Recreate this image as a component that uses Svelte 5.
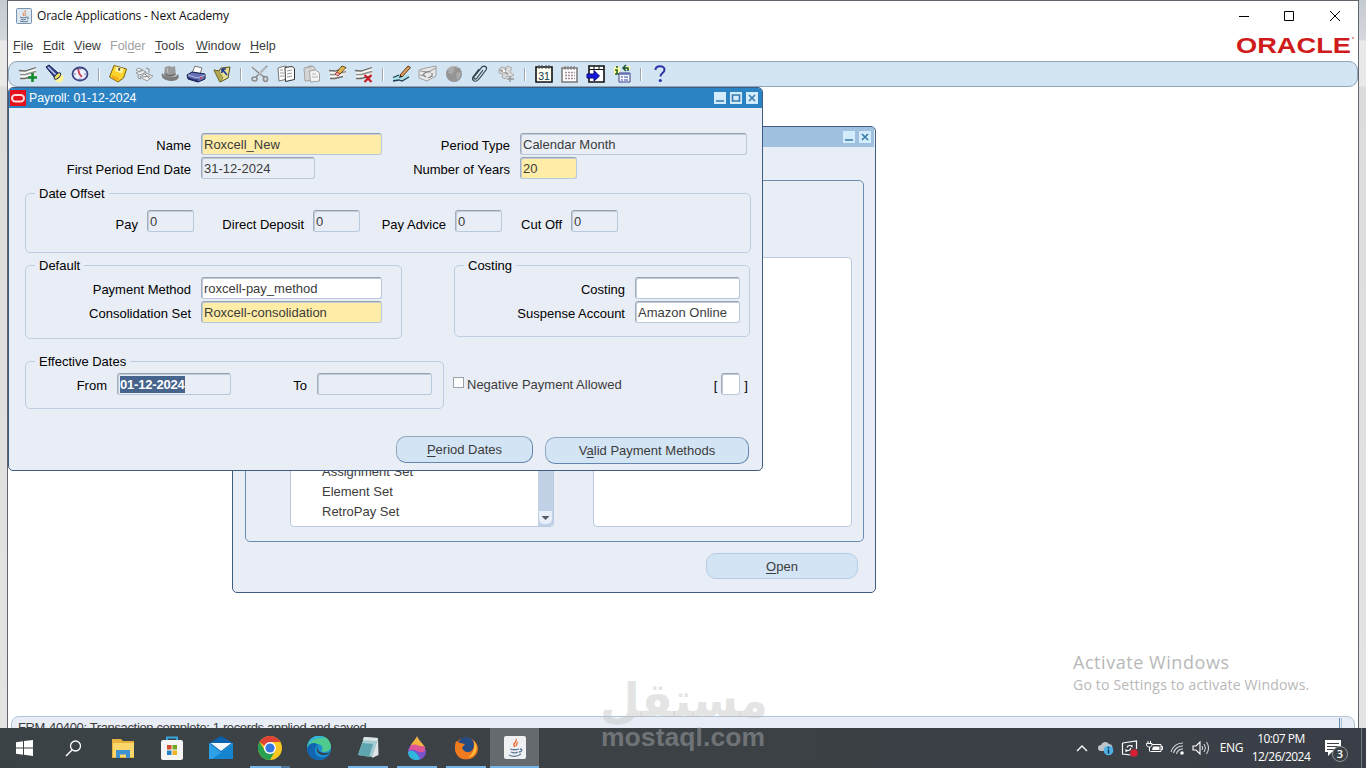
<script lang="ts">
    type Tool = { name: string; art: string };

    const menus = [
        {pre: "", key: "F", post: "ile", w: 30},
        {pre: "", key: "E", post: "dit", w: 31},
        {pre: "", key: "V", post: "iew", w: 36},
        {pre: "Fol", key: "d", post: "er", w: 45, off: true},
        {pre: "", key: "T", post: "ools", w: 41},
        {pre: "", key: "W", post: "indow", w: 54},
        {pre: "", key: "H", post: "elp", w: 40},
    ];

    const rows = `<path d="M2 6l5 1 11-4v9L7 16l-5-1z" fill="#e6e6e0"/><path d="M1 6.500l6 .5 11-3.500M2 14.500h5l8-2" stroke="#6d6d6d" fill="none" stroke-width="1.300"/><path d="M2 10.500h5l11-3" stroke="#8f8f8f" fill="none" stroke-width="1.300"/><path d="M2 9h5l11-3.500M2 12.500h5l8-2" stroke="#fff" fill="none"/>`;

    const toolbar: Tool[][] = [
        [
            {name: "New", art: rows + `<path d="M14.500 9v9M10 13.500h9" stroke="#118a2d" stroke-width="2.600"/>`},
            {name: "Find", art: `<circle cx="15" cy="14" r="4.500" fill="#fff79a"/><path d="M2 3l3-2 9 8-3 5z" fill="#31418c" stroke="#111c50"/><path d="M4 3l8 8" stroke="#c8d0f4" stroke-width="1.500"/><ellipse cx="13.500" cy="12" rx="2" ry="4" transform="rotate(45 13.500 12)" fill="#f7e45c" stroke="#26305e"/>`},
            {name: "Navigator", art: `<ellipse cx="10" cy="10" rx="7.500" ry="6.500" fill="#eef1fb" stroke="#3b4380" stroke-width="1.800"/><path d="M8 5l1.500 5 2.500 3" stroke="#c94057" stroke-width="1.800" fill="none"/><path d="M10 4v2M10 14v2M4 10h2M14 10h2" stroke="#6b78b8"/>`},
        ],
        [
            {name: "Save", art: `<path d="M6 1.500l12.500 3.500-3 9-5.500 4-8.500-5z" fill="#fbd52e" stroke="#79600c"/><path d="M8 2.500l7.500 2-1.500 5-7-2.500z" fill="#fff3a0"/><path d="M5 11l6 3-1.500 3.500-6-4z" fill="#f5ad18"/><path d="M11.500 4l-.5 2.500" stroke="#444" stroke-width="1.800"/>`},
            {name: "Next Step", art: `<path d="M4 4l5 2-3 2-4-2zM2 9l6-3 4 2-6 3zM6 13l6-4 7 3-6 5z" fill="#f0f0f0" stroke="#999"/><path d="M12 4l3 1v4M8 13l8-1M11 10l5 5M4 11v3l3 1" stroke="#8c8c8c" fill="none"/>`},
            {name: "Switch Responsibility", art: `<path d="M4 10l1-7 4-1 3 1 3-1 1 9-4 3-6-1z" fill="#9a9a9a"/><path d="M2 9c-2 6 5 8 10 8 6 0 8-4 6-7-2 4-11 5-16-1z" fill="#7c7c7c"/><path d="M5 10c3 2 7 2 10 0" stroke="#666" fill="none" stroke-width="1.500"/><path d="M7 4l1 5" stroke="#c4c4c4"/>`},
            {name: "Print", art: `<path d="M6 9l3-7 7 2-2 6z" fill="#fff" stroke="#777"/><path d="M1 11l5-3 13 2v5l-7 3-10-3z" fill="#6670b4" stroke="#171d4a"/><path d="M2 11l10 3 7-3" stroke="#b5bce4" fill="none"/><path d="M2 14l9 3v-2" stroke="#262d6c" stroke-width="1.500" fill="none"/><circle cx="15" cy="14" r="1" fill="#df4040"/>`},
            {name: "Close Form", art: `<path d="M2 6l5 1 2-3 9-1-2 11-8 4z" fill="#e9df93" stroke="#55501a"/><path d="M2 6l6 12 3-4-4-7z" fill="#b4aa50" stroke="#6b642a" stroke-width=".6"/><path d="M10 5l5 6M10 5v4M10 5h4" stroke="#17389b" stroke-width="1.600"/>`},
        ],
        [
            {name: "Cut", art: `<path d="M2 3l12 10M17 2L6 13" stroke="#858585" stroke-width="1.600"/><path d="M3 3l10 8M16 3l-8 8" stroke="#e5e5e5" stroke-width=".7"/><ellipse cx="4.500" cy="15" rx="2.500" ry="2" fill="none" stroke="#8d8d8d" stroke-width="1.600"/><ellipse cx="15.500" cy="15" rx="2" ry="2.500" fill="none" stroke="#8d8d8d" stroke-width="1.600"/>`},
            {name: "Copy", art: `<path d="M2 4l7-2 2 1v12l-8 2z" fill="#fff" stroke="#777"/><path d="M9 3.500l7-1 2.500 2v11l-9 2z" fill="#fff" stroke="#333"/><path d="M4 6h3M4 9h4M4 12h4M11 7l5-1M11 10l5-1M11 13l5-1" stroke="#999"/>`},
            {name: "Paste", art: `<path d="M2 4l9-2 2 2v12l-10 1z" fill="#d4d4d4" stroke="#a5a5a5"/><path d="M6 4V2l3-1 1 2" fill="#aaa"/><path d="M7.500 7l6-1 4 3v8l-9 1z" fill="#f4f4f4" stroke="#a0a0a0"/><path d="M10 10h4M10 13h6" stroke="#b5b5b5"/>`},
            {name: "Clear Record", art: rows + `<path d="M8 9l6-7 4 1.500-7 7.500z" fill="#e7b952" stroke="#4a3012" stroke-width=".8"/><path d="M7 10l2-2 3 2-2 2z" fill="#f3adb0" stroke="#922" stroke-width=".8"/>`},
            {name: "Delete Record", art: rows + `<path d="M10.500 11l7 7M17.500 11l-7 7" stroke="#c91924" stroke-width="2.200"/>`},
        ],
        [
            {name: "Edit Field", art: `<path d="M1 14l6-3 2 2 8-3v3l-8 3-2-1-6 2z" fill="#a9e0e8"/><path d="M1 13.500l6-2.500M1 17l6-1 3 1 7-4" stroke="#1c3d50" fill="none" stroke-width="1.300"/><path d="M8 11l8-9 2.500 1.500L10 13z" fill="#d8a05a" stroke="#55290c" stroke-width=".9"/><path d="M8 11l2 2-3 1z" fill="#222"/>`},
            {name: "Zoom", art: `<path d="M1 6l7-2 10-2v10l-9 5-8-3z" fill="#e8e8e8" stroke="#a0a0a0"/><path d="M2 7l8 1 8-4M2 11l5 1" stroke="#999" fill="none"/><path d="M13 8c-3-1-6 0-8 3l3 2M14 9v3l-4 2" stroke="#888" fill="none" stroke-width="1.300"/>`},
            {name: "Translations", art: `<circle cx="10" cy="10" r="8" fill="#949494"/><path d="M5 5l4-2 2 3-3 4-4-1zM12 9l5-1-1 5-3 3z" fill="#aaa"/><path d="M4 6c2-4 8-4 10-2" stroke="#c4c4c4" fill="none"/>`},
            {name: "Attachments", art: `<path d="M13 6l-6 8c-1 2-4 1-3-1l8-10c2-2 6 0 4 3l-7 9c-3 4-8 2-6-2l6-8" fill="none" stroke="#31434b" stroke-width="1.200"/>`},
            {name: "Folder Tools", art: `<path d="M3 5l3-2 3 1 3-2 4 2-2 4 4 3-3 2-4-1-2 3-3-2 1-3-4-1z" fill="#dadada" stroke="#aaa"/><path d="M4 6l8 4M10 4L8 9M14 12v6M11 15h7" stroke="#999" stroke-width="1.400"/><circle cx="8" cy="7" r="1.200" fill="#fff"/>`},
        ],
        [
            {name: "Calendar", art: `<path d="M2 3h16v15H2z" fill="#fffff4" stroke="#111" stroke-width="1.600"/><path d="M5 1v4M8 1v4M12 1v4M15 1v4" stroke="#555"/><text x="10" y="15.500" text-anchor="middle" font-family="Liberation Sans" font-size="10.500" fill="#0d3548">31</text>`},
            {name: "Schedule", art: `<path d="M2 4h15v14H2z" fill="#fff" stroke="#777" stroke-width="1.500"/><path d="M5 2v4M8 2v4M11 2v4M14 2v4" stroke="#777"/><path d="M5 8.500h10M5 11.500h10M5 14.500h10" stroke="#a58b98" stroke-width="1.600" stroke-dasharray="2 1"/>`},
            {name: "Transfer", art: `<path d="M3 2h15v16H3z" fill="#fff" stroke="#111" stroke-width="1.600"/><path d="M3 5.500h15M8 2v4M13 2v4" stroke="#111"/><path d="M1 10h7V6.500l5.500 5.500L8 17v-3H1z" fill="#1717df" stroke="#08087e"/>`},
            {name: "Tasks", art: `<path d="M2 3h6v7H2zM11 2h7v4h-7z" fill="#ffffa2"/><path d="M5 2v2M3 6h2v4M3 10h5" stroke="#28652a" stroke-width="1.600" fill="none"/><path d="M12 4h4v3M14 1l-3 3 3 3" stroke="#17523e" stroke-width="1.500" fill="none"/><path d="M7 9h11v9H7z" fill="#f5f7ff" stroke="#364084"/><path d="M8 10h9" stroke="#5265b4" stroke-width="1.500"/><path d="M9 13h2M12 13h4M9 16h2M12 16h4" stroke="#3e4f9b"/>`},
        ],
        [
            {name: "Help", art: `<path d="M5.500 6c0-5 9-5 9-.5 0 4-4 3-4 7" fill="none" stroke="#2935a3" stroke-width="2"/><circle cx="10.300" cy="16.500" r="1.600" fill="#2935a3"/>`},
        ],
    ];

    const offsets = [
        {label: "Pay", value: 0},
        {label: "Direct Deposit", value: 0},
        {label: "Pay Advice", value: 0},
        {label: "Cut Off", value: 0},
    ];

    const reports = ["Assignment Set", "Element Set", "RetroPay Set"];

    const apps = [
        {name: "File Explorer", run: "", art: `<path d="M1 3h9l2 2h11v17H1z" fill="#e6b23b"/><path d="M2 7h21v14H2z" fill="#fbd76b"/><path d="M5 14h14v8h-4v-3.500H9V22H5z" fill="#3f92d2"/>`},
        {name: "Store", run: "", art: `<path d="M7 5V1.500h10V5" fill="none" stroke="#35a5d8" stroke-width="2"/><rect x="1" y="4" width="22" height="20" rx="2" fill="#f5f5f5"/><path d="M7 9h4.500v4.500H7z" fill="#d34d2c"/><path d="M12.500 9H17v4.500h-4.500z" fill="#75a528"/><path d="M7 14.500h4.500V19H7z" fill="#247ec4"/><path d="M12.500 14.500H17V19h-4.500z" fill="#eeb321"/>`},
        {name: "Mail", run: "", art: `<path d="M0 7l12-7 12 7v16H0z" fill="#0b63ae"/><path d="M0 7l12 9 12-9v16H0z" fill="#2da1e5"/><path d="M3 23l21-15v15z" fill="#1684cf"/><path d="M1.500 7h21L12 15z" fill="#f4fafd"/>`},
        {name: "Chrome", run: "multi", art: `<circle cx="12" cy="12" r="12" fill="#f8c820"/><path d="M1.600 6A12 12 0 0 1 22.400 6H12v8z" fill="#df4336"/><path d="M1.600 6A12 12 0 0 0 12 24l5-9-10 0z" fill="#299f50"/><circle cx="12" cy="12" r="6" fill="#fff"/><circle cx="12" cy="12" r="4.600" fill="#3576e1"/>`},
        {name: "Edge", run: "", art: `<circle cx="12" cy="12" r="12" fill="#1b8fd0"/><path d="M.5 9C3-2 22-4 24 10c0 6-7 7-10 5 3-2 1-7-4-7C5 7 2 10 0 13z" fill="#4fcb8f"/><path d="M.5 9C3-1 14-3 19 3 11 0 3 4 .3 11z" fill="#35b6d8"/><path d="M0 12c2-6 9-6 11-3-5 3-4 10 2 12 3 1 6 0 9-3-5 10-22 7-22-6z" fill="#1265ae"/><path d="M11 10c-2 4 2 8 9 7l3-1c-3 4-11 4-13-1-.6-2 0-4 1-5z" fill="#343d42"/>`},
        {name: "Notepad", run: "single", art: `<path d="M8 1l14 1-5 19-15-2z" fill="#a4ccd2"/><path d="M8 1l14 1-1 3L7 4z" fill="#dde5e5"/><path d="M6 7l11 1-4 13-11-2z" fill="#5fa5b0"/><path d="M22 2l.5 17-6.500 3z" fill="#dfe6e5"/>`},
        {name: "Paint 3D", run: "single", art: `<path d="M12 0c1 5 9 9 9 16a9 8 0 0 1-18 0C3 9 11 5 12 0z" fill="#7754cc"/><path d="M12 0c2 5 7 8 8 12-6 3-8-3-14 0C5 7 11 4 12 0z" fill="#f3b43d"/><path d="M5 11c5-6 9 1 14-1l1 5c-7 4-9-4-16 0z" fill="#df5598"/><path d="M3 16c4-3 9 0 12 7-6 3-12-1-12-7z" fill="#30b8dc"/>`},
        {name: "Firefox", run: "single", art: `<circle cx="12" cy="12.500" r="11" fill="#e76420"/><circle cx="12" cy="9" r="8" fill="#264b83"/><path d="M2 5l4 2 5 1-3 4c3 6 9 5 12 1 2-3 0-7-1-9 9 6 5 19-6 19C3 24-1 14 2 5z" fill="#f07b1f"/><path d="M20 5c5 7 2 15-6 17 6-5 7-10 6-17z" fill="#ffc33b"/>`},
        {name: "Java", run: "active", art: `<rect x="1" y="0" width="22" height="23" rx="2" fill="#eef0f2"/><path d="M13 3c2 3-5 4-1 8M15 6c-3 2 0 2-2 4" fill="none" stroke="#ef7542" stroke-width="1.500"/><path d="M7 13c2 1 7 1 9 0M8 16c2 1 5 1 7 0M6 19c4 2 9 1 12-1M17 13c3 0 2 3-1 3" fill="none" stroke="#587998" stroke-width="1.300"/>`},
    ];
</script>

{#snippet field(value: string | number, kind: string, size: string)}
    <span class="field {kind} {size}">{value}</span>
{/snippet}

{#snippet frameButtons(maximize: boolean)}
    <div class="frame-buttons">
        <svg viewBox="0 0 12 12"><path d="M2 9h8" /></svg>
        {#if maximize}
            <svg viewBox="0 0 12 12"><path d="M2.500 3h7v6h-7z" /></svg>
        {/if}
        <svg viewBox="0 0 12 12"><path d="M3 3l6 6M9 3l-6 6" /></svg>
    </div>
{/snippet}

<div class="desktop">
    <div class="app">
        <header class="titlebar">
            <svg class="java" viewBox="0 0 16 16"><rect x=".5" y=".5" width="15" height="15" rx="1" fill="#dde7f0" stroke="#7894b0" /><path d="M9 2c2 2-4 3-1 6M10 5c-2 1 0 1-1 3" fill="none" stroke="#e57c43" /><path d="M4 9c2 1 5 1 7 0M5 11c1 1 4 1 5 0M4 13c3 1 6 1 8 0M11 9c2 0 2 2 0 2" fill="none" stroke="#567392" /></svg>
            <span class="caption">Oracle Applications - Next Academy</span>
            <svg class="controls" viewBox="0 0 110 20"><path d="M5 10.500h10M50.500 5.500h9v9h-9zM96 5l10 10M106 5l-10 10" /></svg>
        </header>

        <nav class="menubar">
            {#each menus as m}
                <span class:off={m.off} style="width: {m.w}px">{m.pre}<u>{m.key}</u>{m.post}</span>
            {/each}
            <svg class="oracle" viewBox="0 0 120 20"><text x="0" y="17.500" textLength="115" lengthAdjust="spacingAndGlyphs">ORACLE</text><circle cx="117" cy="3" r=".8" /></svg>
        </nav>

        <div class="toolbar">
            {#each toolbar as group, i}
                {#if i > 0}<i class="sep"></i>{/if}
                {#each group as tool}
                    <button class="tool" aria-label={tool.name}><svg viewBox="0 0 20 20">{@html tool.art}</svg></button>
                {/each}
            {/each}
        </div>

        <main class="workspace">
            <section class="frame navigator">
                <div class="frame-title">{@render frameButtons(false)}</div>
                <div class="panel">
                    <div class="list reports">
                        <ul>
                            {#each reports as r}
                                <li>{r}</li>
                            {/each}
                        </ul>
                        <div class="scrollbar"><svg viewBox="0 0 13 13"><path d="M2.500 5h8l-4 4z" /></svg></div>
                    </div>
                    <div class="list top-ten"></div>
                </div>
                <button class="push open"><span><u>O</u>pen</span></button>
            </section>

            <section class="frame payroll">
                <div class="frame-title">
                    <svg class="badge" viewBox="0 0 16 16"><path d="M0 0h16v16H0z" fill="#e5101c" /><rect x="2" y="5" width="12" height="6.500" rx="3.200" fill="none" stroke="#ffdada" stroke-width="2" /></svg>
                    <span>Payroll: 01-12-2024</span>
                    {@render frameButtons(true)}
                </div>

                <div class="basics">
                    <label>Name</label>{@render field("Roxcell_New", "required", "w181")}
                    <label>Period Type</label>{@render field("Calendar Month", "locked", "w227")}
                    <label>First Period End Date</label>{@render field("31-12-2024", "locked", "w114")}
                    <label>Number of Years</label>{@render field("20", "required", "w57")}
                </div>

                <fieldset class="offset">
                    <legend>Date Offset</legend>
                    <div class="offset-row">
                        {#each offsets as o}
                            <div><label>{o.label}</label>{@render field(o.value, "locked", "w47")}</div>
                        {/each}
                    </div>
                </fieldset>

                <div class="pair">
                    <fieldset class="default">
                        <legend>Default</legend>
                        <div class="lines">
                            <label>Payment Method</label>{@render field("roxcell-pay_method", "", "w181")}
                            <label>Consolidation Set</label>{@render field("Roxcell-consolidation", "required", "w181")}
                        </div>
                    </fieldset>
                    <fieldset class="costing">
                        <legend>Costing</legend>
                        <div class="lines">
                            <label>Costing</label>{@render field("", "", "w105")}
                            <label>Suspense Account</label>{@render field("Amazon Online", "", "w105")}
                        </div>
                    </fieldset>
                </div>

                <div class="dates-row">
                    <fieldset class="effective">
                        <legend>Effective Dates</legend>
                        <div class="dates">
                            <label>From</label><span class="field locked w114"><mark>01-12-2024</mark></span>
                            <label>To</label>{@render field("", "locked", "w115")}
                        </div>
                    </fieldset>
                    <div class="negative"><i class="check"></i><span>Negative Payment Allowed</span></div>
                    <div class="flex-field"><b>[</b>{@render field("", "", "w19")}<b>]</b></div>
                </div>

                <div class="actions">
                    <button class="push strong period"><span><u>P</u>eriod Dates</span></button>
                    <button class="push strong valid"><span>V<u>a</u>lid Payment Methods</span></button>
                </div>
            </section>
        </main>

        <footer class="status"><span>FRM-40400: Transaction complete: 1 records applied and saved.</span><i></i></footer>
    </div>

    <div class="activate">
        <h2>Activate Windows</h2>
        <p>Go to Settings to activate Windows.</p>
    </div>

    <div class="taskbar">
        <div class="task"><svg width="17" height="16" viewBox="0 0 17 16"><path d="M0 2.300L7 1.300v6.200H0zM8 1.100L17 0v7.500H8zM0 8.500h7v6.200l-7-1zM8 8.500h9V16l-9-1.300z" fill="#fff" /></svg></div>
        <div class="task"><svg class="search" width="17" height="17" viewBox="0 0 17 17"><circle cx="10.500" cy="6" r="5" fill="none" stroke="#fff" stroke-width="1.300" /><path d="M7 10L1 16" stroke="#fff" stroke-width="1.500" /></svg></div>
        {#each apps as app}
            <div class="task {app.run}" title={app.name}><svg width="24" height="24" viewBox="0 0 24 24">{@html app.art}</svg></div>
        {/each}
        <div class="tray">
            <svg class="more" width="12" height="8" viewBox="0 0 12 8"><path d="M1 7l5-5 5 5" fill="none" stroke="#fff" stroke-width="1.300" /></svg>
            <svg width="17" height="16" viewBox="0 0 17 16"><path d="M4 11a3 3 0 0 1 0-6 4.500 4.500 0 0 1 8-1c3 0 4 3 3 5l-2 2z" fill="#bfc4c8" /><circle cx="11.500" cy="10.500" r="4.800" fill="#4db1e4" /><path d="M11.500 9.500v4M11.500 7v1.400" stroke="#102f46" stroke-width="1.400" /></svg>
            <svg width="18" height="17" viewBox="0 0 18 17"><path d="M1.500 3L15.500 1v8M1.500 3v11l8 1" fill="none" stroke="#fff" stroke-width="1.200" /><path d="M6 7.500c1-3 4-2 5-1V5M10 8c-1 3-4 3-5 2v2" fill="none" stroke="#fff" stroke-width="1.100" /><circle cx="13" cy="13" r="3.800" fill="#d71f35" /></svg>
            <svg width="17" height="14" viewBox="0 0 17 14"><path d="M6 3.500h9v7H4.500M15 5.500h1.500v3H15M2 0v2.500M4.500 0v2.500M.5 2.500H6c0 3-1 3.500-2.700 3.500S.5 5.500.5 2.500zM3.500 6v4.500" fill="none" stroke="#fff" /><path d="M7 5.500h6.500V9H6z" fill="#fff" /></svg>
            <svg width="15" height="14" viewBox="0 0 15 14"><path d="M1 11A12 12 0 0 1 13 2M3.500 12A9 9 0 0 1 13 5M6.500 13A6 6 0 0 1 13 8" fill="none" stroke="#d8dbdd" stroke-width="1.100" /><circle cx="12" cy="12" r="1.800" fill="#fff" /></svg>
            <svg width="17" height="14" viewBox="0 0 17 14"><path d="M1 5h3l4-4v12L4 9H1z" fill="none" stroke="#fff" stroke-width="1.100" /><path d="M10 5q1.500 2 0 4M12 3q3 4 0 8M14.500 1q4 6 0 12" fill="none" stroke="#dfe1e3" /></svg>
            <span class="lang">ENG</span>
            <div class="clock"><span>10:07 PM</span><span>12/26/2024</span></div>
            <svg class="notes" width="26" height="24" viewBox="0 0 26 24"><path d="M1 1h16v12H8l-4 4v-4H1z" fill="#fff" /><path d="M3 4.500h12M3 7.500h12M3 10.500h8" stroke="#3b4047" /><circle cx="16" cy="15" r="7.500" fill="#3b4047" stroke="#92969a" /><text x="16" y="19" text-anchor="middle" font-family="Open Sans" font-size="11" font-weight="600" fill="#fff">3</text></svg>
        </div>
        <i class="peek"></i>
    </div>

    <svg class="watermark" viewBox="0 0 170 108">
        <text class="ar" x="0" y="66" direction="ltr" textLength="168" lengthAdjust="spacingAndGlyphs">مستقل</text>
        <text class="en" x="1" y="95" textLength="164">mostaql.com</text>
    </svg>
</div>

<style>
    :global(body) {
        margin: 0;
        overflow: hidden;
    }

    .desktop {
        position: relative;
        width: 1366px;
        height: 768px;
        overflow: hidden;
        display: flex;
        flex-direction: column;
        background: linear-gradient(#c5cad1 0, #d5d8dc 40px, #e9e9e9 41px, #e9e9e9 86px, #dcdcdc 87px, #e4e4e4);
        font: 13px/14px "Liberation Sans", Arial, sans-serif;
        color: #3c3c3c;
    }

    .app {
        box-sizing: border-box;
        width: 1352px;
        height: 728px;
        margin-left: 7px;
        display: flex;
        flex-direction: column;
        overflow: hidden;
        background: #fff;
        border: 1px solid #5f666e;
        border-bottom: 0;
    }

    .titlebar {
        height: 30px;
        flex: none;
        display: flex;
        align-items: center;
        padding: 0 14px 0 8px;
        font: 12px/16px "Open Sans", "Noto Sans", sans-serif;
        color: #111;
    }

    .java {
        width: 16px;
        height: 16px;
        margin-right: 5px;
    }

    .caption {
        letter-spacing: -0.2px;
    }

    .controls {
        width: 110px;
        height: 20px;
        margin-left: auto;
        fill: none;
        stroke: #000;
    }

    .menubar {
        height: 30px;
        flex: none;
        display: flex;
        align-items: center;
        padding-left: 5px;
        font-size: 12.5px;
    }

    .menubar .off {
        color: #a0a0a0;
    }

    .oracle {
        width: 120px;
        height: 20px;
        margin: 0 2px 2px auto;
        fill: #cf1b1b;
        font: 700 21.5px "Liberation Sans", sans-serif;
    }

    u {
        text-underline-offset: 2px;
    }

    .toolbar {
        box-sizing: border-box;
        height: 26px;
        display: flex;
        align-items: center;
        padding-left: 6px;
        background: #d3e4f3;
        border: 1px solid #8fa5b8;
        border-radius: 9px;
        flex: none;
    }

    .tool {
        width: 26px;
        height: 22px;
        padding: 1px 3px;
        border: 0;
        background: none;
    }

    .tool svg {
        display: block;
        width: 20px;
        height: 20px;
    }

    .sep {
        width: 2px;
        height: 13px;
        margin: 0 5px;
        background: linear-gradient(90deg, #9aa5b0 50%, #fff 50%);
    }

    .workspace {
        position: relative;
        height: 629px;
        flex: none;
    }

    .frame {
        position: absolute;
        box-sizing: border-box;
        background: #e9eef6;
        border: 1px solid #3f5d80;
        border-radius: 5px;
        overflow: hidden;
    }

    .navigator {
        left: 224px;
        top: 39px;
        width: 644px;
        height: 467px;
    }

    .payroll {
        left: 0;
        top: 0;
        width: 755px;
        height: 384px;
    }

    .frame-title {
        height: 20px;
        display: flex;
        align-items: center;
        background: #2c83c4;
        color: #fff;
        font-size: 12.3px;
        gap: 2px;
        padding-right: 4px;
    }

    .payroll .frame-title {
        padding-left: 2px;
    }

    .navigator .frame-title {
        background: #9fc1df;
        margin-right: 1px;
        padding-right: 3px;
    }

    .badge {
        width: 16px;
        height: 16px;
        margin-left: -1px;
        margin-right: 1px;
    }

    .frame-buttons {
        display: flex;
        gap: 4px;
        margin-left: auto;
    }

    .frame-buttons svg {
        width: 12px;
        height: 12px;
        background: #d3ecfb;
        fill: none;
        stroke: #3779aa;
        stroke-width: 1.6;
    }

    .panel {
        box-sizing: border-box;
        height: 362px;
        margin: 33px 11px 0 12px;
        padding: 76px 11px 14px 44px;
        display: flex;
        justify-content: space-between;
        border: 1px solid #6b8bb0;
        border-radius: 5px;
    }

    .list {
        box-sizing: border-box;
        background: #fff;
        border: 1px solid #b9cade;
        border-radius: 4px;
        overflow: hidden;
    }

    .reports {
        display: flex;
        align-items: stretch;
        width: 264px;
    }

    .reports ul {
        flex: 1;
        align-self: flex-end;
        margin: 0 0 4px;
        padding: 0 0 0 31px;
        list-style: none;
    }

    .reports li {
        height: 20px;
        line-height: 20px;
    }

    .scrollbar {
        width: 15px;
        display: flex;
        align-items: flex-end;
        background: #c1d1e6;
    }

    .scrollbar svg {
        width: 13px;
        height: 13px;
        margin: 0 1px 2px;
        background: #e9eff8;
        border-radius: 0 0 5px 5px;
        fill: #555c66;
    }

    .top-ten {
        width: 259px;
    }

    .push {
        box-sizing: border-box;
        height: 27px;
        padding: 0;
        background: #d3e4f4;
        border: 1px solid #b5cde3;
        border-radius: 10px;
        font: 13px/14px "Liberation Sans", Arial, sans-serif;
        color: #3c3c3c;
    }

    .push.strong {
        border-color: #8fa8c2 #6286ad #6286ad #8fa8c2;
    }

    .open {
        display: block;
        width: 152px;
        height: 26px;
        margin: 11px 0 0 473px;
        padding-top: 1px;
    }

    label {
        color: #000;
        text-align: right;
        padding-top: 3px;
    }

    .field {
        box-sizing: border-box;
        display: block;
        height: 22px;
        padding-left: 1px;
        line-height: 19px;
        white-space: pre;
        background: #fff;
        border: 1px solid #b9c9dc;
        border-top-color: #95a2b2;
        border-left-color: #a0adbd;
        border-radius: 3px;
        box-shadow: inset 1px 1px 0 #c3ccd8;
        padding-top: 1px;
        padding-left: 2px;
    }

    .locked {
        background: #e9eef6;
    }

    .required {
        background: #ffeca6;
    }

    .w181 { width: 181px; }
    .w227 { width: 227px; }
    .w114 { width: 114px; }
    .w115 { width: 115px; }
    .w105 { width: 105px; }
    .w57 { width: 57px; }
    .w47 { width: 47px; }
    .w19 { width: 19px; }

    .basics {
        display: grid;
        grid-template-columns: 182px 181px 118px 227px;
        column-gap: 10px;
        row-gap: 2px;
        margin-top: 25px;
    }

    .basics label,
    .lines label {
        padding-top: 6px;
    }

    fieldset {
        box-sizing: border-box;
        min-width: 0;
        margin: 0;
        padding: 0;
        border: 1px solid #bfcde0;
        border-radius: 5px;
    }

    legend {
        height: 14px;
        margin-left: 9px;
        padding: 0 4px;
        line-height: 16px;
        color: #000;
    }

    .offset {
        width: 726px;
        height: 67px;
        margin: 7px 0 0 16px;
    }

    .offset-row {
        display: grid;
        grid-template-columns: 168px 166px 142px 116px;
        margin-top: 10px;
    }

    .offset-row div {
        display: flex;
        justify-content: flex-end;
        gap: 9px;
    }

    .offset-row label {
        padding-top: 8px;
    }

    .pair {
        display: flex;
        margin: 5px 0 0 16px;
        gap: 52px;
    }

    .default {
        width: 377px;
        height: 81px;
    }

    .costing {
        width: 296px;
        height: 79px;
    }

    .lines {
        display: grid;
        grid-template-columns: 165px 181px;
        gap: 2px 10px;
        margin-top: 5px;
    }

    .costing .lines {
        grid-template-columns: 170px 105px;
    }

    .dates-row {
        display: flex;
        margin: 15px 0 0 16px;
    }

    .effective {
        width: 419px;
        height: 55px;
    }

    .dates {
        display: grid;
        grid-template-columns: 81px 114px 66px 115px;
        column-gap: 10px;
        margin-top: 5px;
    }

    .dates label {
        padding-top: 6px;
    }

    mark {
        display: block;
        width: 65px;
        height: 17px;
        margin-top: 1px;
        line-height: 17px;
        background: #46648c;
        color: #fff;
        font-weight: 700;
        letter-spacing: -0.2px;
    }

    .negative {
        display: flex;
        gap: 3px;
        margin: 23px 0 0 9px;
    }

    .negative span {
        padding-top: 1px;
    }

    .check {
        box-sizing: border-box;
        width: 11px;
        height: 11px;
        background: #fff;
        border: 1px solid #98a1aa;
    }

    .flex-field {
        display: flex;
        gap: 4px;
        margin: 19px 0 0 92px;
    }

    .flex-field b {
        padding-top: 6px;
        color: #000;
        font-weight: 400;
    }

    .actions {
        display: flex;
        gap: 12px;
        margin: 27px 0 0 387px;
    }

    .period {
        width: 137px;
    }

    .valid {
        width: 204px;
        margin-top: 1px;
    }

    .status {
        box-sizing: border-box;
        flex: none;
        height: 26px;
        margin: 0 3px;
        padding: 4px 12px 0 6px;
        display: flex;
        justify-content: space-between;
        background: #e9eef6;
        border: 1px solid #b2c4d8;
        border-radius: 8px;
    }

    .status span {
        letter-spacing: -0.36px;
    }

    .status i {
        width: 1px;
        height: 20px;
        margin-top: -3px;
        border-left: 1px solid #6487ad;
        border-right: 1px solid #a8bdd5;
    }

    .activate {
        position: absolute;
        left: 1073px;
        top: 650px;
        color: #b8b8b8;
        font-family: "Open Sans", "Noto Sans", sans-serif;
        white-space: nowrap;
    }

    .activate h2 {
        margin: 0;
        font-size: 18px;
        line-height: 24px;
        font-weight: 400;
        letter-spacing: 0.55px;
    }

    .activate p {
        margin: 2px 0 0;
        font-size: 14px;
        line-height: 18px;
        letter-spacing: 0.2px;
    }

    .taskbar {
        height: 40px;
        display: flex;
        background: linear-gradient(90deg, #3b4245, #3c4146 60%, #3a3e47);
        color: #fff;
    }

    .task {
        box-sizing: border-box;
        position: relative;
        width: 49px;
        height: 40px;
        display: flex;
        align-items: center;
        justify-content: center;
    }

    .single::after,
    .multi::after,
    .active::after {
        content: "";
        position: absolute;
        left: 5px;
        right: 4px;
        bottom: 0;
        height: 2px;
        background: #76b5e8;
    }

    .multi::after {
        background: linear-gradient(90deg, #76b5e8 31px, #4e7799 31px);
    }

    .active {
        background: #656a6e;
    }

    .active::after {
        left: 0;
        right: 0;
    }

    .tray {
        margin-left: auto;
        display: flex;
        align-items: center;
        gap: 7px;
        font: 12px/18px "Open Sans", "Noto Sans", sans-serif;
    }

    .more {
        margin-right: 2px;
    }

    .lang {
        margin-left: 4px;
        letter-spacing: -0.4px;
    }

    .clock {
        width: 62px;
        display: flex;
        flex-direction: column;
        text-align: center;
        letter-spacing: -0.5px;
    }

    .notes {
        margin: 6px 6px 0 5px;
    }

    .peek {
        width: 4px;
        margin-left: 5px;
        border-left: 1px solid #73777d;
    }

    .watermark {
        position: absolute;
        left: 600px;
        top: 651px;
        width: 170px;
        height: 108px;
        fill: rgba(190, 190, 190, 0.42);
    }

    .ar {
        font: 700 48px "DejaVu Sans", sans-serif;
    }

    .en {
        font: 700 26.5px "Liberation Sans", sans-serif;
    }
</style>
